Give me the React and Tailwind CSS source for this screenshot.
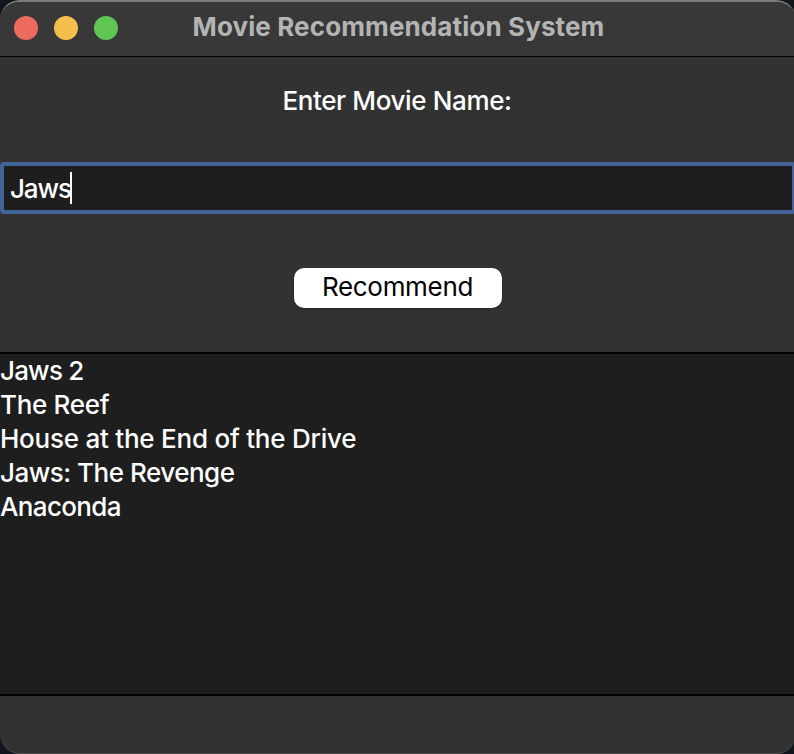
const movies = [
  { title: "Jaws 2", tracking: "tracking-[-0.8px]" },
  { title: "The Reef", tracking: "tracking-[-0.3px]" },
  { title: "House at the End of the Drive", tracking: "tracking-[-0.24px]" },
  { title: "Jaws: The Revenge", tracking: "tracking-[-0.5px]" },
  { title: "Anaconda", tracking: "tracking-[-0.65px]" },
];

function TitleBar() {
  return (
    <header className="grid h-[55px] shrink-0 grid-cols-[1fr_auto_1fr] border-b border-black bg-[#383838]">
      <div className="flex gap-4 pl-[14px] pt-[14px]">
        <span className="size-6 rounded-full bg-[#ed6a5e]" />
        <span className="size-6 rounded-full bg-[#f5bf4f]" />
        <span className="size-6 rounded-full bg-[#61c554]" />
      </div>
      <h1 className="whitespace-nowrap pt-[9px] pl-px text-[26px] leading-[32px] font-bold tracking-[0.12px] text-[#b4b4b4]">
        Movie Recommendation System
      </h1>
    </header>
  );
}

export default function App() {
  return (
    <div className="h-[754px] w-[794px] overflow-hidden bg-[#10151e] font-['Inter','Liberation_Sans',sans-serif] text-[26px] font-[450] text-white">
      <main className="flex h-full w-[796px] flex-col overflow-hidden rounded-[20px] border-t-2 border-b border-t-[#7c7c7c] border-b-[#4c4c4c] bg-[#323232]">
        <TitleBar />
        <label className="mt-[28px] h-8 pr-[2px] text-center leading-8 tracking-[-0.37px]">Enter Movie Name:</label>
        <div className="mt-[45px] flex h-[52px] shrink-0 items-center rounded-[4px] border-4 border-[#426496] bg-[#1e1e1e] pl-[6px]">
          <span className="w-[60px] pt-[2px] leading-8 tracking-[-1.1px]">Jaws</span>
          <span className="h-8 w-[2px] shrink-0 bg-white" />
        </div>
        <button className="mx-auto mt-[54px] h-10 w-[208px] shrink-0 rounded-[10px] bg-white pr-px pb-[2px] leading-[38px] font-normal tracking-[-0.3px] text-black shadow-[0_1px_2px_#0005]">
          Recommend
        </button>
        <ul className="mt-[44px] h-[344px] shrink-0 border-y-2 border-black bg-[#1e1e1e]">
          {movies.map(({ title, tracking }) => (
            <li key={title} className={`h-[34px] leading-[34px] ${tracking}`}>{title}</li>
          ))}
        </ul>
      </main>
    </div>
  );
}
